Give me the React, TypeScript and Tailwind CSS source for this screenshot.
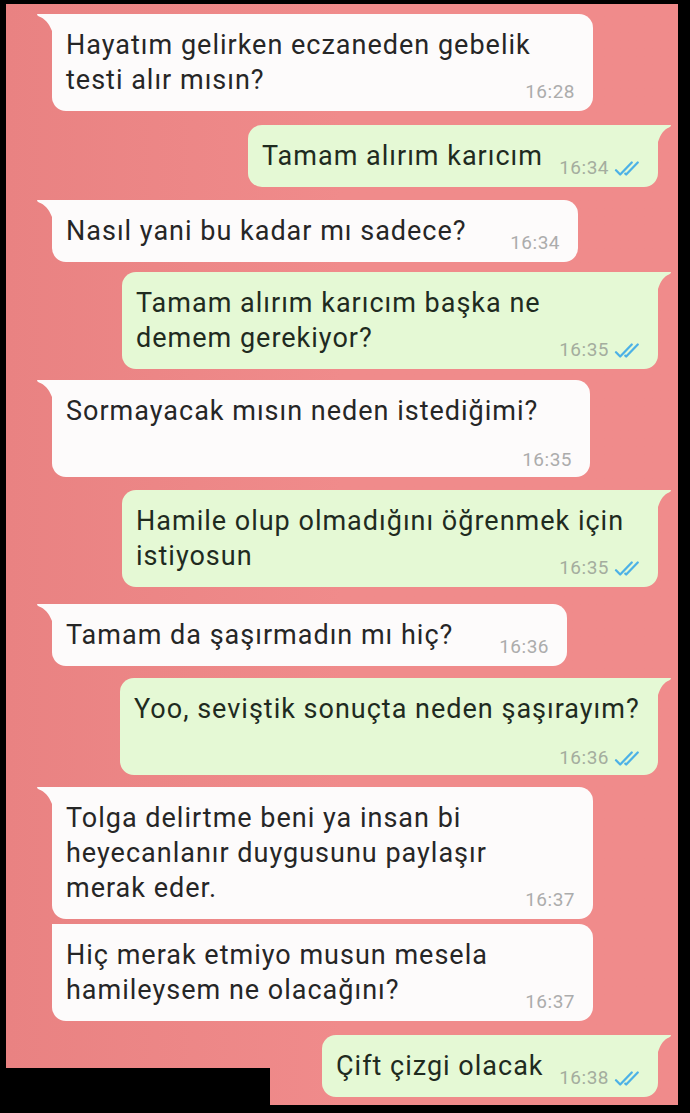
import React from 'react';

type Msg = {
  out: boolean;
  lines: string[];
  time: string;
  w: number;
  mt: string;
  timeBelow?: boolean;
  noTail?: boolean;
};

const messages: Msg[] = [
  { out: false, lines: ['Hayatım gelirken eczaneden gebelik', 'testi alır mısın?'], time: '16:28', w: 541, mt: 'mt-[10px]' },
  { out: true, lines: ['Tamam alırım karıcım'], time: '16:34', w: 410, mt: 'mt-[14px]' },
  { out: false, lines: ['Nasıl yani bu kadar mı sadece?'], time: '16:34', w: 526, mt: 'mt-[13px]' },
  { out: true, lines: ['Tamam alırım karıcım başka ne', 'demem gerekiyor?'], time: '16:35', w: 536, mt: 'mt-[10px]' },
  { out: false, lines: ['Sormayacak mısın neden istediğimi?'], time: '16:35', w: 538, mt: 'mt-[11px]', timeBelow: true },
  { out: true, lines: ['Hamile olup olmadığını öğrenmek için', 'istiyosun'], time: '16:35', w: 536, mt: 'mt-[13px]' },
  { out: false, lines: ['Tamam da şaşırmadın mı hiç?'], time: '16:36', w: 515, mt: 'mt-[17px]' },
  { out: true, lines: ['Yoo, seviştik sonuçta neden şaşırayım?'], time: '16:36', w: 538, mt: 'mt-[12px]', timeBelow: true },
  { out: false, lines: ['Tolga delirtme beni ya insan bi', 'heyecanlanır duygusunu paylaşır', 'merak eder.'], time: '16:37', w: 541, mt: 'mt-[12px]' },
  { out: false, lines: ['Hiç merak etmiyo musun mesela', 'hamileysem ne olacağını?'], time: '16:37', w: 541, mt: 'mt-[5px]', noTail: true },
  { out: true, lines: ['Çift çizgi olacak'], time: '16:38', w: 336, mt: 'mt-[14px]' },
];

function Ticks() {
  return (
    <svg width="31" height="15" viewBox="0 0 20 10" fill="none" stroke="#4cb1e6" strokeWidth="1.5" strokeLinecap="round" strokeLinejoin="round">
      <path d="M1 6.2 L3.8 9 L11.5 1" />
      <path d="M7.2 8.4 L7.8 9 L15.5 1" />
    </svg>
  );
}

function Time({ msg }: { msg: Msg }) {
  return (
    <span
      className={`flex items-center gap-[5px] text-[19px] leading-[20px] tracking-[0.5px] ${
        msg.out ? 'text-[#a4ad9e]' : 'text-[#acacac]'
      } ${msg.timeBelow ? 'translate-y-[6px]' : 'translate-y-[4px]'}`}
    >
      {msg.time}
      {msg.out && <Ticks />}
    </span>
  );
}

function Bubble({ msg }: { msg: Msg }) {
  const last = msg.lines.length - 1;
  return (
    <div
      className={`flex items-start ${msg.out ? 'justify-end pr-[7px]' : 'pl-[31px]'} ${msg.mt}`}
    >
      {!msg.out && !msg.noTail && (
        <svg width="15" height="17" viewBox="0 0 15 17" className="shrink-0">
          <path d="M0 0 H15 V17 C12 9 7 4 2 2.5 Q0 1.8 0 0 Z" fill="#fdfbfb" />
        </svg>
      )}
      {!msg.out && msg.noTail && <div className="w-[15px] shrink-0" />}
      <div
        style={{ width: msg.w }}
        className={`rounded-[14px] pt-[14px] pb-[13px] pl-[14px] ${
          msg.out ? 'bg-[#e5f9d5] text-[#1f2b1f] rounded-tr-none pr-[13px]' : 'bg-[#fdfbfb] text-[#262626] rounded-tl-none pr-[18px]'
        }`}
      >
        {msg.lines.map((line, i) => (
          <div key={i} className="flex items-end justify-between h-[35px]">
            <span className="leading-[35px] whitespace-nowrap tracking-[1px]">{line}</span>
            {i === last && !msg.timeBelow && <Time msg={msg} />}
          </div>
        ))}
        {msg.timeBelow && (
          <div className="flex items-end justify-end h-[35px]">
            <Time msg={msg} />
          </div>
        )}
      </div>
      {msg.out && (
        <svg width="13" height="17" viewBox="0 0 13 17" className="shrink-0">
          <path d="M13 0 H0 V17 C2.5 9 6.5 4 11 2.5 Q13 1.8 13 0 Z" fill="#e5f9d5" />
        </svg>
      )}
    </div>
  );
}

export default function App() {
  return (
    <div
      className="relative w-[690px] h-[1113px] bg-black overflow-hidden text-[27px]"
      style={{ fontFamily: 'Roboto, "Noto Sans", sans-serif' }}
    >
      <div className="ml-[6px] mt-[4px] w-[672px] h-[1101px] bg-gradient-to-r from-[#e98282] via-[#f08b8b] to-[#f08b8b] flex flex-col">
        {messages.map((m, i) => (
          <Bubble key={i} msg={m} />
        ))}
      </div>
      {/* redacted strip */}
      <div className="absolute left-0 bottom-0 w-[270px] h-[45px] bg-black" />
    </div>
  );
}
